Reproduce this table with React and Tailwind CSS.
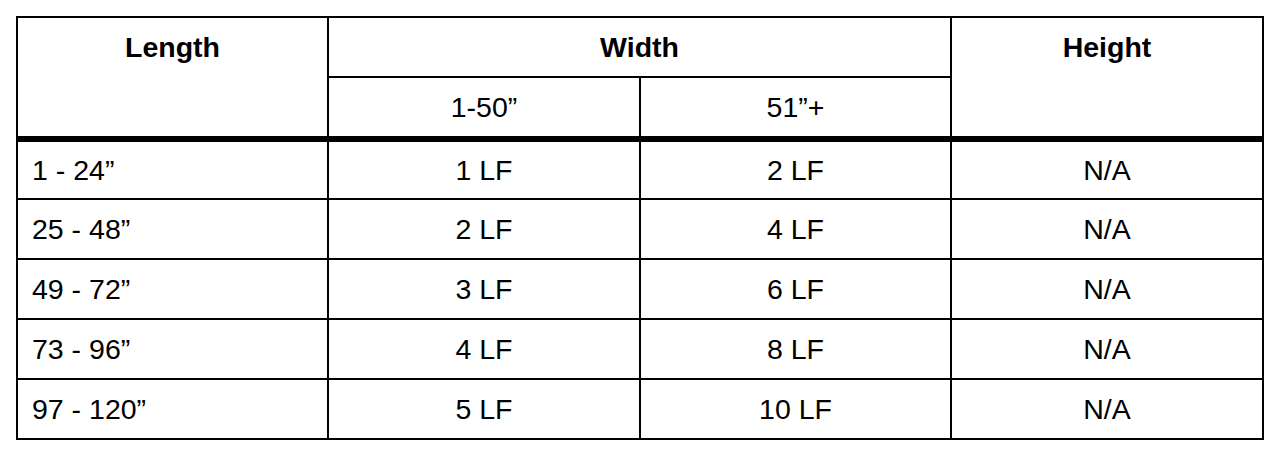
import React from 'react';

const rows = [
  ['1 - 24\u201D', '1 LF', '2 LF', 'N/A'],
  ['25 - 48\u201D', '2 LF', '4 LF', 'N/A'],
  ['49 - 72\u201D', '3 LF', '6 LF', 'N/A'],
  ['73 - 96\u201D', '4 LF', '8 LF', 'N/A'],
  ['97 - 120\u201D', '5 LF', '10 LF', 'N/A'],
];

const App = () => {
  return (
    <div className="bg-white w-[1280px] h-[458px] pt-4 pl-4 font-['Liberation_Sans',Arial,sans-serif] text-[28.5px] leading-none text-black">
      <table className="w-[1248px] border-collapse table-fixed">
        <colgroup>
          <col className="w-[311px]" />
          <col className="w-[312px]" />
          <col className="w-[311px]" />
          <col className="w-[312px]" />
        </colgroup>
        <thead>
          <tr className="h-[60px]">
            <th rowSpan={2} className="border-2 border-black border-b-[6px] align-top p-0 font-bold">
              <div className="h-[58px] flex items-center justify-center">Length</div>
            </th>
            <th colSpan={2} className="border-2 border-black font-bold p-0">Width</th>
            <th rowSpan={2} className="border-2 border-black border-b-[6px] align-top p-0 font-bold">
              <div className="h-[58px] flex items-center justify-center">Height</div>
            </th>
          </tr>
          <tr className="h-[62px]">
            <th className="border-2 border-black border-b-[6px] font-normal p-0">1-50{'\u201D'}</th>
            <th className="border-2 border-black border-b-[6px] font-normal p-0">51{'\u201D'}+</th>
          </tr>
        </thead>
        <tbody>
          {rows.map((r) => (
            <tr key={r[0]} className="h-[60px]">
              <td className="border-2 border-black px-[14px] text-left">{r[0]}</td>
              <td className="border-2 border-black text-center">{r[1]}</td>
              <td className="border-2 border-black text-center">{r[2]}</td>
              <td className="border-2 border-black text-center">{r[3]}</td>
            </tr>
          ))}
        </tbody>
      </table>
    </div>
  );
};

export default App;
